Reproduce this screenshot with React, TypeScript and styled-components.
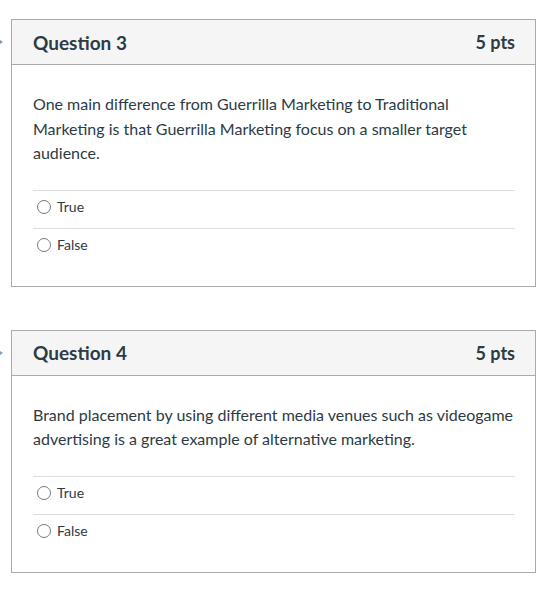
import styled, { createGlobalStyle } from "styled-components";

const GlobalStyle = createGlobalStyle`
  body {
    margin: 0;
    background: #fff;
    font-family: Lato, "Liberation Sans", sans-serif;
    color: #2d3b45;
  }
`;

const questions = [
  {
    id: 3,
    points: 5,
    text: "One main difference from Guerrilla Marketing to Traditional Marketing is that Guerrilla Marketing focus on a smaller target audience.",
  },
  {
    id: 4,
    points: 5,
    text: "Brand placement by using different media venues such as videogame advertising is a great example of alternative marketing.",
  },
];

export default function App() {
  return (
    <>
      <GlobalStyle />
      <Page>
        {questions.map((q) => (
          <QuestionWrap key={q.id}>
            <Marker />
            <Card>
              <Header>
                <Title>Question {q.id}</Title>
                <Points>{q.points} pts</Points>
              </Header>
              <Body>
                <Prompt>{q.text}</Prompt>
                <Answers>
                  {["True", "False"].map((a) => (
                    <Answer key={a}>
                      <Radio />
                      <AnswerLabel>{a}</AnswerLabel>
                    </Answer>
                  ))}
                </Answers>
              </Body>
            </Card>
          </QuestionWrap>
        ))}
      </Page>
    </>
  );
}

const Page = styled.div`
  padding: 19px 20px 0 11px;
  display: flex;
  flex-direction: column;
  gap: 43px;
`;

const QuestionWrap = styled.div`
  position: relative;
`;

const Marker = styled.div`
  position: absolute;
  left: -11px;
  top: 21px;
  width: 0;
  height: 0;
  border-top: 2px solid transparent;
  border-bottom: 2px solid transparent;
  border-left: 3px solid #7d9bb8;
`;

const Card = styled.div`
  border: 1px solid #aaaaaa;
  width: 523px;
`;

const Header = styled.div`
  display: flex;
  justify-content: space-between;
  align-items: center;
  height: 45px;
  padding: 0 20px 0 21px;
  background: #f5f5f5;
  border-bottom: 1px solid #aaaaaa;
  box-sizing: border-box;
`;

const Title = styled.h2`
  margin: 0;
  font-size: 19px;
  font-weight: 700;
  color: #2d3b45;
`;

const Points = styled.span`
  font-size: 18px;
  font-weight: 700;
  color: #2d3b45;
`;

const Body = styled.div`
  padding: 27px 20px 20px 21px;
`;

const Prompt = styled.p`
  margin: 0 0 24px;
  font-size: 16px;
  line-height: 24.5px;
  color: #2d3b45;
`;

const Answers = styled.div`
  border-top: 1px solid #dddddd;
`;

const Answer = styled.div`
  display: flex;
  align-items: center;
  height: 37px;
  padding: 0 0 5px 4px;
  box-sizing: border-box;
  gap: 6px;
  & + & {
    border-top: 1px solid #dddddd;
    height: 38px;
  }
`;

const Radio = styled.span`
  width: 12px;
  height: 12px;
  border: 1px solid #777;
  border-radius: 50%;
  box-sizing: content-box;
`;

const AnswerLabel = styled.span`
  font-size: 14px;
  color: #2d3b45;
`;
